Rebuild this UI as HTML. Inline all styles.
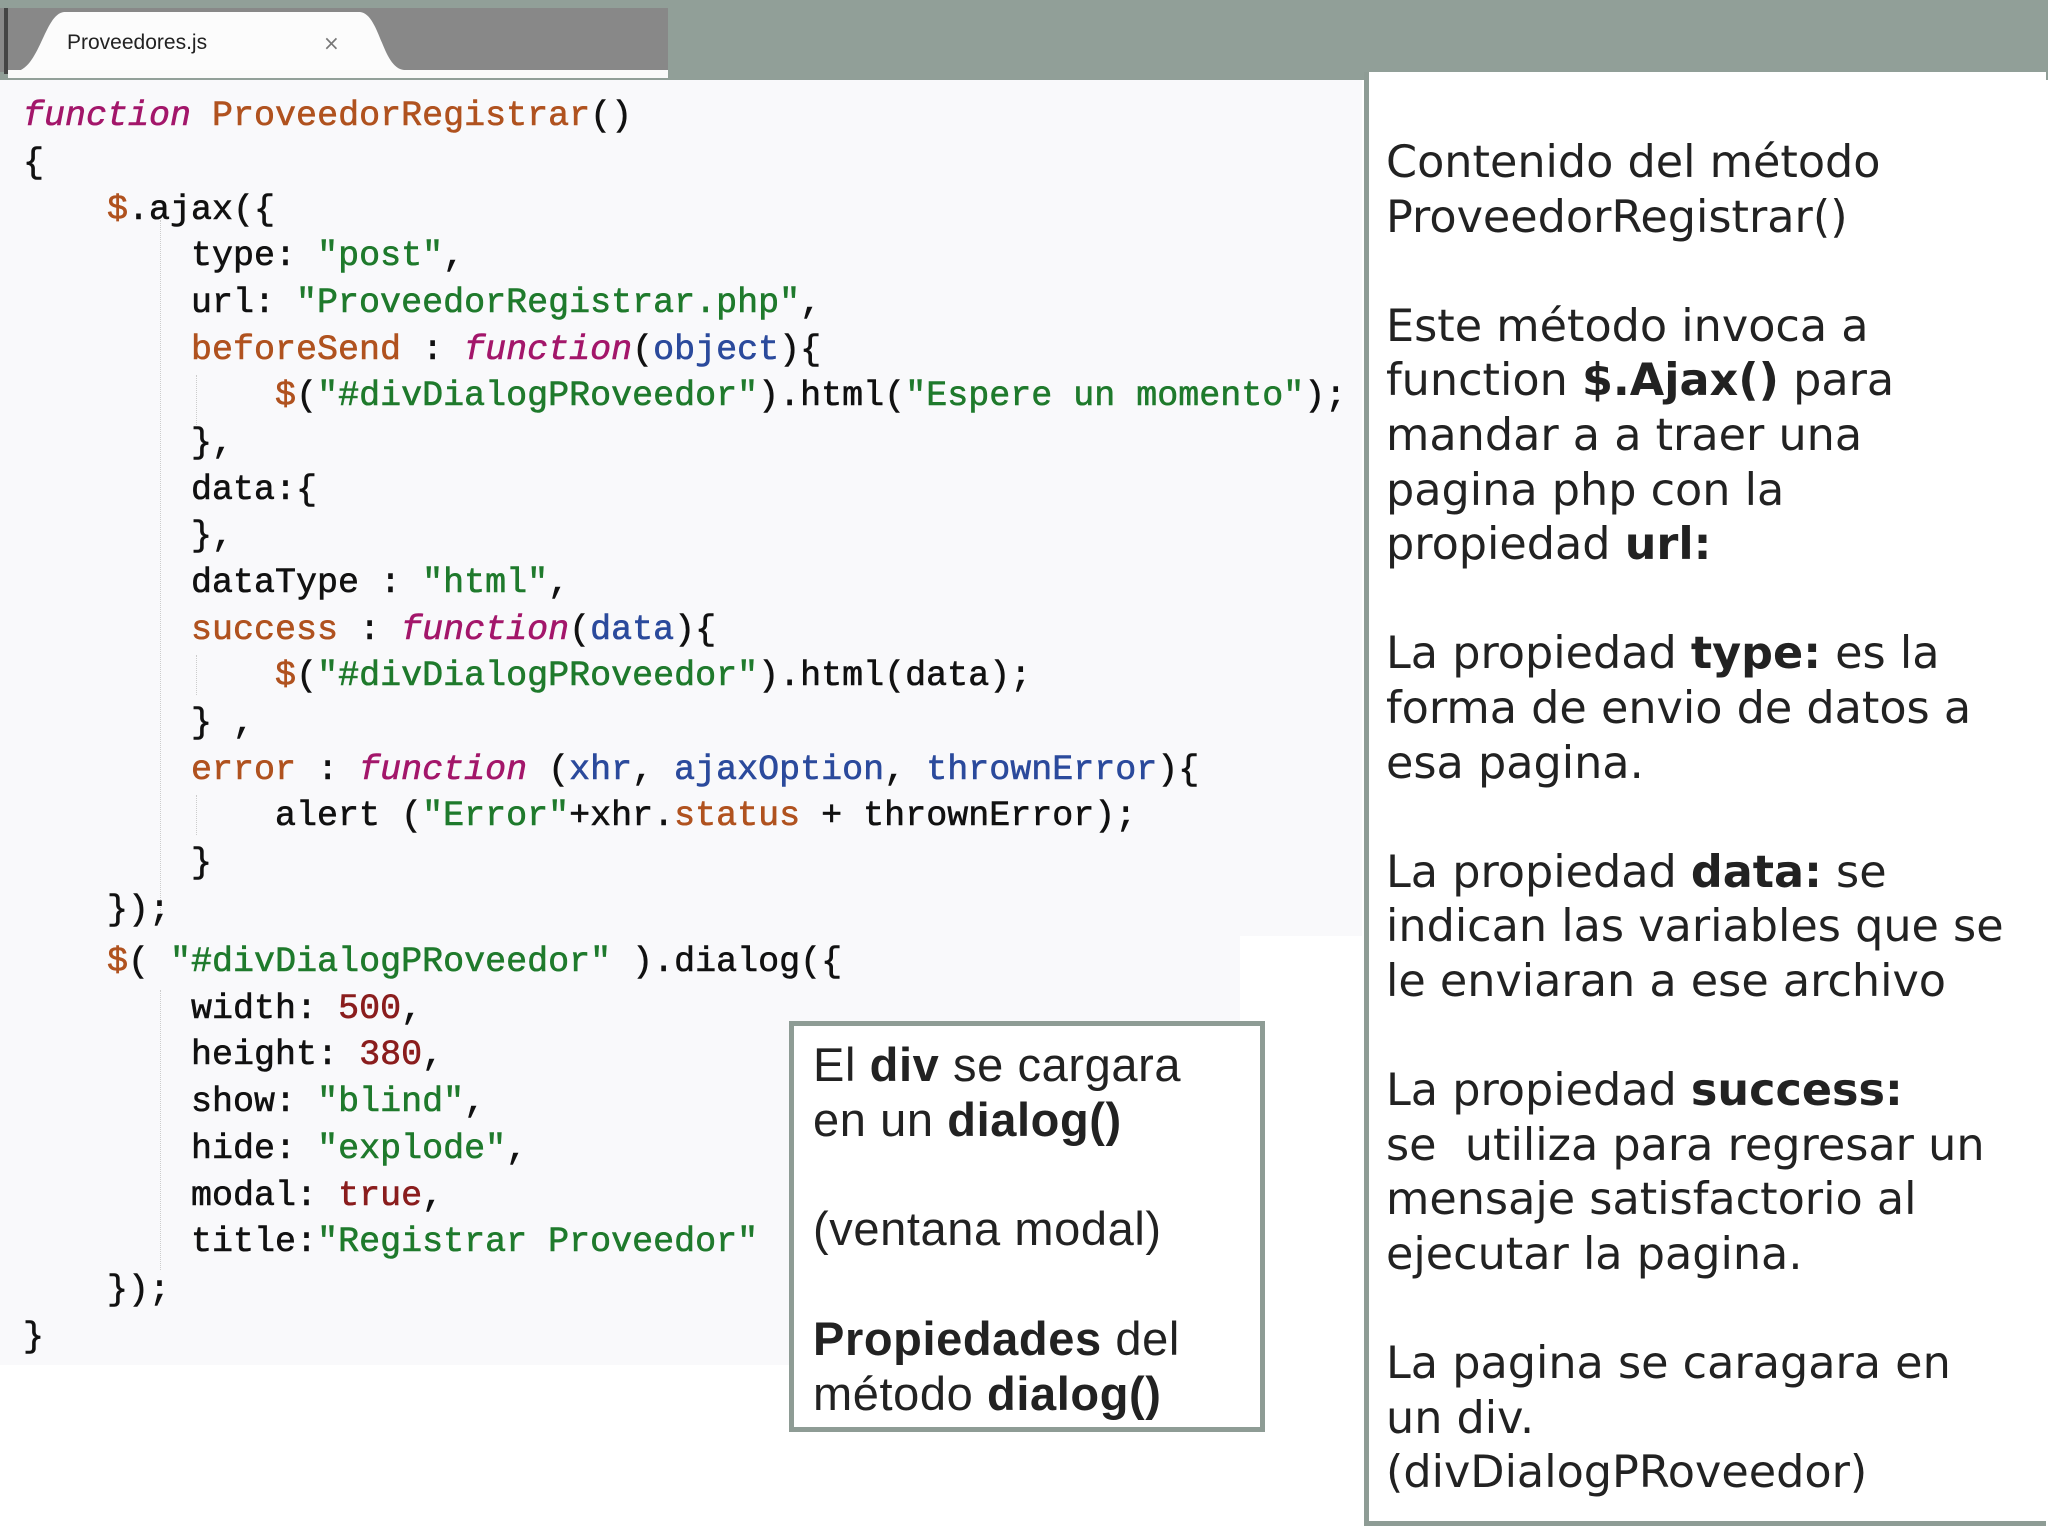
<!DOCTYPE html>
<html><head><meta charset="utf-8"><style>
*{margin:0;padding:0;box-sizing:border-box}
html,body{width:2048px;height:1536px;overflow:hidden;background:#fff}
.top{position:absolute;left:0;top:0;width:2048px;height:80px;background:#919f98}
.strip{position:absolute;left:0;top:8px;width:668px;height:64px;background:#888}
.wline{position:absolute;left:8px;top:70px;width:660px;height:8px;background:#fafafa}
.code{position:absolute;left:0;top:80px;width:1362px;height:856px;background:#f9f9fb}
.code2{position:absolute;left:0;top:930px;width:1240px;height:435px;background:#f9f9fb}
.l{position:absolute;left:23px;font-family:"Liberation Mono",monospace;font-size:35px;line-height:46px;height:46px;white-space:pre;color:#111;-webkit-text-stroke:0.6px currentColor}
.k{color:#a3166a;font-style:italic}
.f{color:#b0521f}
.s{color:#1f7a2c}
.p{color:#2b4a9c}
.n{color:#8a1d1d}
.guide{position:absolute;border-left:1px dotted #ccc}
.dlg{position:absolute;left:789px;top:1021px;width:476px;height:411px;border:5px solid #8e9c95;background:#fff}
.dlg div{position:absolute;left:19px;top:12px;font-family:"Liberation Sans",sans-serif;font-size:47px;letter-spacing:0.6px;line-height:54.8px;white-space:pre;color:#222}
.rp{position:absolute;left:1364px;top:72px;width:682px;height:1454px;border:5px solid #8e9c95;border-top:none;border-right:none;background:#fff}
.rp div{position:absolute;left:17px;top:64px;font-family:"DejaVu Sans",sans-serif;font-size:44.5px;line-height:54.6px;white-space:pre;color:#222}
b{font-weight:bold}
</style></head><body>
<div class="top"></div>
<div class="strip"></div>
<svg style="position:absolute;left:0;top:0" width="668" height="80">
<path d="M14 72 C40 70 44 14 64 12 L360 12 C380 14 382 68 404 70 L404 72 Z" fill="#fcfcfc"/>
<rect x="4" y="8" width="4" height="66" fill="#444"/>
<text x="67" y="49" font-family="Liberation Sans, sans-serif" font-size="21" fill="#222">Proveedores.js</text>
<text x="323" y="50" font-family="DejaVu Sans, sans-serif" font-size="20" fill="#777">×</text>
</svg>
<div class="wline"></div>
<div class="code"></div>
<div class="code2"></div>
<div class="guide" style="left:160px;top:220px;height:700px"></div>
<div class="guide" style="left:196px;top:375px;height:50px"></div>
<div class="guide" style="left:196px;top:655px;height:40px"></div>
<div class="guide" style="left:196px;top:795px;height:40px"></div>
<div class="guide" style="left:160px;top:990px;height:280px"></div>

<div class="l" style="top:93px"><span class="k">function</span> <span class="f">ProveedorRegistrar</span>()</div>
<div class="l" style="top:140px">{</div>
<div class="l" style="top:187px">    <span class="f">$</span>.ajax({</div>
<div class="l" style="top:233px">        type: <span class="s">"post"</span>,</div>
<div class="l" style="top:280px">        url: <span class="s">"ProveedorRegistrar.php"</span>,</div>
<div class="l" style="top:327px">        <span class="f">beforeSend</span> : <span class="k">function</span>(<span class="p">object</span>){</div>
<div class="l" style="top:373px">            <span class="f">$</span>(<span class="s">"#divDialogPRoveedor"</span>).html(<span class="s">"Espere un momento"</span>);</div>
<div class="l" style="top:420px">        },</div>
<div class="l" style="top:467px">        data:{</div>
<div class="l" style="top:513px">        },</div>
<div class="l" style="top:560px">        dataType : <span class="s">"html"</span>,</div>
<div class="l" style="top:607px">        <span class="f">success</span> : <span class="k">function</span>(<span class="p">data</span>){</div>
<div class="l" style="top:653px">            <span class="f">$</span>(<span class="s">"#divDialogPRoveedor"</span>).html(data);</div>
<div class="l" style="top:700px">        } ,</div>
<div class="l" style="top:747px">        <span class="f">error</span> : <span class="k">function</span> (<span class="p">xhr</span>, <span class="p">ajaxOption</span>, <span class="p">thrownError</span>){</div>
<div class="l" style="top:793px">            alert (<span class="s">"Error"</span>+xhr.<span class="f">status</span> + thrownError);</div>
<div class="l" style="top:840px">        }</div>
<div class="l" style="top:887px">    });</div>
<div class="l" style="top:939px">    <span class="f">$</span>( <span class="s">"#divDialogPRoveedor"</span> ).dialog({</div>
<div class="l" style="top:986px">        width: <span class="n">500</span>,</div>
<div class="l" style="top:1032px">        height: <span class="n">380</span>,</div>
<div class="l" style="top:1079px">        show: <span class="s">"blind"</span>,</div>
<div class="l" style="top:1126px">        hide: <span class="s">"explode"</span>,</div>
<div class="l" style="top:1173px">        modal: <span class="n">true</span>,</div>
<div class="l" style="top:1219px">        title:<span class="s">"Registrar Proveedor"</span></div>
<div class="l" style="top:1267px">    });</div>
<div class="l" style="top:1314px">}</div>

<div class="dlg"><div>El <b>div</b> se cargara
en un <b>dialog()</b>

(ventana modal)

<b>Propiedades</b> del
método <b>dialog()</b></div></div>

<div class="rp"><div>Contenido del método
ProveedorRegistrar()

Este método invoca a
function <b>$.Ajax()</b> para
mandar a a traer una
pagina php con la
propiedad <b>url:</b>

La propiedad <b>type:</b> es la
forma de envio de datos a
esa pagina.

La propiedad <b>data:</b> se
indican las variables que se
le enviaran a ese archivo

La propiedad <b>success:</b>
se  utiliza para regresar un
mensaje satisfactorio al
ejecutar la pagina.

La pagina se caragara en
un div.
(divDialogPRoveedor)</div></div>
</body></html>
